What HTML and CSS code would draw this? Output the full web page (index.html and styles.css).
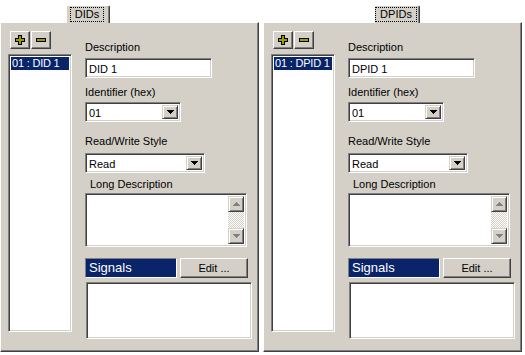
FILE: index.html
```html
<!DOCTYPE html>
<html>
<head>
<meta charset="utf-8">
<link rel="stylesheet" href="styles.css">
</head>
<body>
<div class="root">
  <section class="pane">
    <div class="tabrow"><div class="tab tab-left"><span class="focus">DIDs</span></div></div>
    <div class="page">
      <div class="leftcol">
        <div class="btns">
          <div class="tbtn"><svg width="10" height="10" viewBox="0 0 10 10" shape-rendering="crispEdges"><path d="M3 0h4v3h3v4h-3v3h-4v-3h-3v-4h3z" fill="#000"/><path d="M4 1h2v3h3v2h-3v3h-2v-3h-3v-2h3z" fill="#9c9c00"/></svg></div>
          <div class="tbtn"><svg width="10" height="10" viewBox="0 0 10 10" shape-rendering="crispEdges"><path d="M0 3h10v4h-10z" fill="#000"/><path d="M1 4h8v2h-8z" fill="#9c9c00"/></svg></div>
        </div>
        <div class="list"><div class="item sel">01 : DID 1</div></div>
      </div>
      <div class="form">
        <div class="lbl l-desc">Description</div>
        <div class="sunken input-desc">DID 1</div>
        <div class="lbl l-id">Identifier (hex)</div>
        <div class="sunken combo combo-id"><span class="val">01</span><span class="drop"><svg width="7" height="4" viewBox="0 0 7 4" shape-rendering="crispEdges"><path d="M0 0h7v1h-1v1h-1v1h-1v1h-1v-1h-1v-1h-1v-1h-1z" fill="#000"/></svg></span></div>
        <div class="lbl l-rw">Read/Write Style</div>
        <div class="sunken combo combo-rw"><span class="val">Read</span><span class="drop"><svg width="7" height="4" viewBox="0 0 7 4" shape-rendering="crispEdges"><path d="M0 0h7v1h-1v1h-1v1h-1v1h-1v-1h-1v-1h-1v-1h-1z" fill="#000"/></svg></span></div>
        <div class="lbl l-long">Long Description</div>
        <div class="sunken memo">
          <div class="memo-text"></div>
          <div class="vscroll">
            <span class="sbtn"><svg width="7" height="5" viewBox="0 0 7 5" shape-rendering="crispEdges"><path d="M0 3h7v1h-7zM1 2h5v1h-5zM2 1h3v1h-3zM3 0h1v1h-1z" fill="#808080"/></svg></span>
            <span class="track"></span>
            <span class="sbtn"><svg width="7" height="5" viewBox="0 0 7 5" shape-rendering="crispEdges"><path d="M0 0h7v1h-7zM1 1h5v1h-5zM2 2h3v1h-3zM3 3h1v1h-1z" fill="#808080"/></svg></span>
          </div>
        </div>
        <div class="sigrow">
          <div class="sigbar">Signals</div>
          <div class="raised editbtn">Edit ...</div>
        </div>
        <div class="sunken siglist"></div>
      </div>
    </div>
  </section>
  <section class="pane">
    <div class="tabrow"><div class="tab tab-right"><span class="focus">DPIDs</span></div></div>
    <div class="page">
      <div class="leftcol">
        <div class="btns">
          <div class="tbtn"><svg width="10" height="10" viewBox="0 0 10 10" shape-rendering="crispEdges"><path d="M3 0h4v3h3v4h-3v3h-4v-3h-3v-4h3z" fill="#000"/><path d="M4 1h2v3h3v2h-3v3h-2v-3h-3v-2h3z" fill="#9c9c00"/></svg></div>
          <div class="tbtn"><svg width="10" height="10" viewBox="0 0 10 10" shape-rendering="crispEdges"><path d="M0 3h10v4h-10z" fill="#000"/><path d="M1 4h8v2h-8z" fill="#9c9c00"/></svg></div>
        </div>
        <div class="list"><div class="item sel">01 : DPID 1</div></div>
      </div>
      <div class="form">
        <div class="lbl l-desc">Description</div>
        <div class="sunken input-desc">DPID 1</div>
        <div class="lbl l-id">Identifier (hex)</div>
        <div class="sunken combo combo-id"><span class="val">01</span><span class="drop"><svg width="7" height="4" viewBox="0 0 7 4" shape-rendering="crispEdges"><path d="M0 0h7v1h-1v1h-1v1h-1v1h-1v-1h-1v-1h-1v-1h-1z" fill="#000"/></svg></span></div>
        <div class="lbl l-rw">Read/Write Style</div>
        <div class="sunken combo combo-rw"><span class="val">Read</span><span class="drop"><svg width="7" height="4" viewBox="0 0 7 4" shape-rendering="crispEdges"><path d="M0 0h7v1h-1v1h-1v1h-1v1h-1v-1h-1v-1h-1v-1h-1z" fill="#000"/></svg></span></div>
        <div class="lbl l-long">Long Description</div>
        <div class="sunken memo">
          <div class="memo-text"></div>
          <div class="vscroll">
            <span class="sbtn"><svg width="7" height="5" viewBox="0 0 7 5" shape-rendering="crispEdges"><path d="M0 3h7v1h-7zM1 2h5v1h-5zM2 1h3v1h-3zM3 0h1v1h-1z" fill="#808080"/></svg></span>
            <span class="track"></span>
            <span class="sbtn"><svg width="7" height="5" viewBox="0 0 7 5" shape-rendering="crispEdges"><path d="M0 0h7v1h-7zM1 1h5v1h-5zM2 2h3v1h-3zM3 3h1v1h-1z" fill="#808080"/></svg></span>
          </div>
        </div>
        <div class="sigrow">
          <div class="sigbar">Signals</div>
          <div class="raised editbtn">Edit ...</div>
        </div>
        <div class="sunken siglist"></div>
      </div>
    </div>
  </section>
</div>
</body>
</html>
```

FILE: styles.css
```css
* { box-sizing: border-box; }
html, body { margin: 0; padding: 0; background: #fff; }
body {
  font-family: "Liberation Sans", Arial, sans-serif;
  font-size: 11px;
  color: #000;
  width: 525px;
  height: 355px;
  overflow: hidden;
}
.root {
  display: flex;
  gap: 4px;
}
.pane {
  width: 259px;
  display: flex;
  flex-direction: column;
}
.tabrow {
  height: 23px;
  display: flex;
  align-items: flex-end;
  position: relative;
  z-index: 2;
  margin-bottom: -1px;
}
.tab {
  height: 18px;
  background: #d4d0c8;
  border-top: 1px solid #fff;
  border-left: 1px solid #fff;
  border-right: 1px solid #404040;
  box-shadow: inset -1px 0 #808080;
  border-radius: 2px 2px 0 0;
  display: flex;
  align-items: flex-start;
  justify-content: center;
  padding-top: 1px;
}
.tab-left { margin-left: 66px; width: 44px; }
.tab-right { margin-left: 111px; width: 46px; }
.focus {
  border: 1px dotted #000;
  height: 15px;
  line-height: 13px;
  padding: 0 4px;
  margin-left: -2px;
}
.page {
  height: 330px;
  background: #d4d0c8;
  border: 1px solid;
  border-color: #fff #404040 #404040 #fff;
  box-shadow: inset -1px -1px #808080;
  display: flex;
  padding-left: 7px;
}
.leftcol {
  width: 64px;
  display: flex;
  flex-direction: column;
}
.btns {
  display: flex;
  gap: 1px;
  margin-top: 8px;
  margin-left: 2px;
}
.tbtn {
  width: 20px;
  height: 18px;
  border: 1px solid;
  border-color: #fff #404040 #404040 #fff;
  box-shadow: inset -1px -1px #808080;
  display: flex;
  align-items: center;
  justify-content: center;
}
.tbtn svg { display: block; }
.sunken {
  background: #fff;
  border: 1px solid;
  border-color: #808080 #fff #fff #808080;
  box-shadow: inset 1px 1px #404040, inset -1px -1px #d4d0c8;
}
.list {
  margin-top: 5px;
  height: 278px;
  background: #fff;
  border: 1px solid;
  border-color: #808080 #fff #fff #808080;
  box-shadow: inset 1px 1px #404040, inset -1px -1px #d4d0c8;
  padding: 2px;
  overflow: hidden;
}
.item {
  height: 13px;
  line-height: 13px;
  padding-left: 1px;
  white-space: nowrap;
  letter-spacing: -0.2px;
}
.item.sel { background: #0a246a; color: #fff; }
.form {
  margin-left: 13px;
  display: flex;
  flex-direction: column;
  align-items: flex-start;
}
.lbl { line-height: 13px; white-space: nowrap; }
.l-desc { margin-top: 18px; }
.input-desc {
  margin-top: 4px;
  width: 127px;
  height: 20px;
  line-height: 16px;
  padding: 2px 3px;
}
.l-id { margin-top: 8px; }
.combo {
  height: 20px;
  display: flex;
  align-items: stretch;
  padding: 2px;
}
.combo .val { flex: 1; line-height: 16px; padding-left: 1px; }
.drop {
  width: 16px;
  background: #d4d0c8;
  border: 1px solid;
  border-color: #d4d0c8 #404040 #404040 #d4d0c8;
  box-shadow: inset 1px 1px #fff, inset -1px -1px #808080;
  display: flex;
  align-items: center;
  justify-content: center;
}
.drop svg { display: block; }
.combo-id { margin-top: 3px; width: 96px; }
.l-rw { margin-top: 13px; }
.combo-rw { margin-top: 5px; width: 120px; }
.l-long { margin-top: 5px; margin-left: 5px; }
.memo {
  margin-top: 2px;
  width: 162px;
  height: 54px;
  display: flex;
  padding: 2px;
}
.memo-text { flex: 1; }
.vscroll {
  width: 16px;
  display: flex;
  flex-direction: column;
}
.sbtn {
  height: 16px;
  background: #d4d0c8;
  border: 1px solid;
  border-color: #d4d0c8 #404040 #404040 #d4d0c8;
  box-shadow: inset 1px 1px #fff, inset -1px -1px #808080;
  display: flex;
  align-items: center;
  justify-content: center;
}
.sbtn svg { display: block; }
.track {
  flex: 1;
  background: repeating-conic-gradient(#fff 0 25%, #d4d0c8 0 50%) 0 0 / 2px 2px;
}
.sigrow {
  margin-top: 11px;
  display: flex;
  gap: 3px;
  height: 20px;
}
.sigbar {
  width: 92px;
  background: #0a246a;
  color: #fff;
  font-size: 13px;
  line-height: 18px;
  padding-left: 3px;
  border: 1px solid;
  border-color: #808080 #fff #fff #808080;
}
.raised {
  background: #d4d0c8;
  border: 1px solid;
  border-color: #fff #404040 #404040 #fff;
  box-shadow: inset -1px -1px #808080;
}
.editbtn {
  width: 68px;
  text-align: center;
  line-height: 18px;
}
.siglist {
  margin-top: 4px;
  margin-left: 1px;
  width: 166px;
  height: 57px;
}
```
